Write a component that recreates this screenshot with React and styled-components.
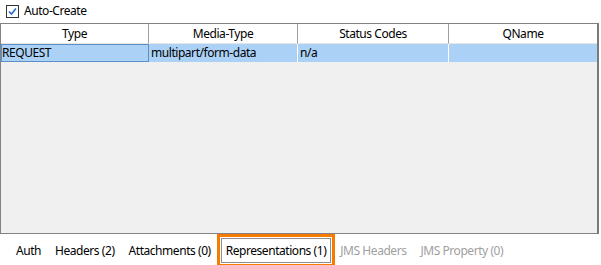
import React from "react";
import styled, { createGlobalStyle } from "styled-components";

const Global = createGlobalStyle`
  html, body { margin: 0; padding: 0; background: #ffffff; }
  body {
    font-family: "Segoe UI", "Noto Sans", "Open Sans", sans-serif;
    font-size: 12px;
    letter-spacing: -0.45px;
    color: #000;
  }
`;

const Page = styled.div`
  width: 601px;
  height: 265px;
  display: flex;
  flex-direction: column;
  overflow: hidden;
`;

const CheckRow = styled.label`
  display: flex;
  align-items: center;
  gap: 5px;
  height: 23px;
  padding-left: 6px;
  padding-bottom: 1px;
  box-sizing: border-box;
  line-height: 16px;
`;

const Box = styled.span`
  width: 11px;
  height: 11px;
  border: 1px solid #333;
  background: #fff;
  display: flex;
  align-items: center;
  justify-content: center;
`;

const Table = styled.div`
  width: 599px;
  height: 211px;
  box-sizing: border-box;
  border: 1px solid #828282;
  border-right: 2px solid #7a7a7a;
  background: #f0f0f0;
  display: flex;
  flex-direction: column;
`;

const Row = styled.div`
  display: grid;
  grid-template-columns: 148px 149px 151px 1fr;
  height: ${(p) => p.$h}px;
  background: ${(p) => p.$bg};
`;

const HeadCell = styled.div`
  text-align: center;
  line-height: 19px;
  border-right: ${(p) => (p.$last ? "none" : "1px solid #a0a0a0")};
  border-bottom: 1px solid #e5e5e5;
`;

const Cell = styled.div`
  line-height: 17px;
  padding-left: ${(p) => (p.$first ? "1px" : "2px")};
  box-sizing: border-box;
  border-right: ${(p) => (p.$last ? "none" : "1px solid #ffffff")};
  outline: ${(p) => (p.$focus ? "1px solid #5a8fc8" : "none")};
  outline-offset: -1px;
  white-space: nowrap;
`;

const Tabs = styled.div`
  display: flex;
  align-items: center;
  padding-left: 11px;
  padding-top: 2px;
  height: 31px;
  box-sizing: border-box;
`;

const Tab = styled.span`
  padding: 3px 4px 3px;
  margin-right: ${(p) => p.$mr ?? 4}px;
  color: ${(p) => (p.$disabled ? "#a0a0a0" : "#000")};
  border: 1px solid ${(p) => (p.$active ? "#8e8e8e" : "transparent")};
  outline: ${(p) => (p.$hl ? "3px solid #f57c00" : "none")};
  outline-offset: 1px;
  line-height: 17px;
  white-space: nowrap;
`;

export default function App() {
  return (
    <Page>
      <Global />
      <CheckRow>
        <Box>
          <svg width="9" height="9" viewBox="0 0 9 9">
            <path d="M1 4.5 L3.5 7 L8 1.5" fill="none" stroke="#2a6ac8" strokeWidth="1.6" />
          </svg>
        </Box>
        Auto-Create
      </CheckRow>
      <Table>
        <Row $h={20} $bg="#ffffff">
          <HeadCell>Type</HeadCell>
          <HeadCell>Media-Type</HeadCell>
          <HeadCell>Status Codes</HeadCell>
          <HeadCell $last>QName</HeadCell>
        </Row>
        <Row $h={18} $bg="#abd2f6">
          <Cell $first $focus>REQUEST</Cell>
          <Cell>multipart/form-data</Cell>
          <Cell>n/a</Cell>
          <Cell $last></Cell>
        </Row>
      </Table>
      <Tabs>
        <Tab>Auth</Tab>
        <Tab>Headers (2)</Tab>
        <Tab $mr={5}>Attachments (0)</Tab>
        <Tab $active $hl $mr={4}>Representations (1)</Tab>
        <Tab $disabled>JMS Headers</Tab>
        <Tab $disabled>JMS Property (0)</Tab>
      </Tabs>
    </Page>
  );
}
